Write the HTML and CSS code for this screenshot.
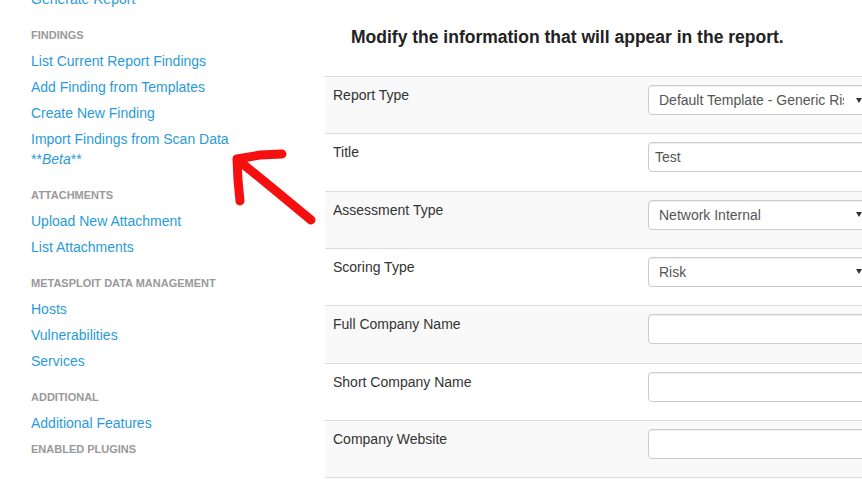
FILE: index.html
```html
<!DOCTYPE html>
<html>
<head>
<meta charset="utf-8">
<link rel="stylesheet" href="styles.css">
</head>
<body>
<div class="page">
  <nav class="sidebar">
    <a class="nav-link" href="#">Generate Report</a>
    <div class="nav-header">Findings</div>
    <a class="nav-link" href="#">List Current Report Findings</a>
    <a class="nav-link" href="#">Add Finding from Templates</a>
    <a class="nav-link" href="#">Create New Finding</a>
    <a class="nav-link" href="#">Import Findings from Scan Data **<em>Beta</em>**</a>
    <div class="nav-header">Attachments</div>
    <a class="nav-link" href="#">Upload New Attachment</a>
    <a class="nav-link" href="#">List Attachments</a>
    <div class="nav-header">Metasploit Data Management</div>
    <a class="nav-link" href="#">Hosts</a>
    <a class="nav-link" href="#">Vulnerabilities</a>
    <a class="nav-link" href="#">Services</a>
    <div class="nav-header">Additional</div>
    <a class="nav-link" href="#">Additional Features</a>
    <div class="nav-header nav-header-tight">Enabled Plugins</div>
  </nav>
  <main class="main">
    <h3 class="heading">Modify the information that will appear in the report.</h3>
    <div class="form-table">
      <div class="row row-alt">
        <div class="label">Report Type</div>
        <div class="field"><div class="select"><span class="select-text">Default Template - Generic Risk Scoring</span><span class="caret"></span></div></div>
      </div>
      <div class="row">
        <div class="label">Title</div>
        <div class="field"><div class="input">Test</div></div>
      </div>
      <div class="row row-alt">
        <div class="label">Assessment Type</div>
        <div class="field"><div class="select"><span class="select-text">Network Internal</span><span class="caret"></span></div></div>
      </div>
      <div class="row">
        <div class="label">Scoring Type</div>
        <div class="field"><div class="select"><span class="select-text">Risk</span><span class="caret"></span></div></div>
      </div>
      <div class="row row-alt">
        <div class="label">Full Company Name</div>
        <div class="field"><div class="input"></div></div>
      </div>
      <div class="row">
        <div class="label">Short Company Name</div>
        <div class="field"><div class="input"></div></div>
      </div>
      <div class="row row-alt">
        <div class="label">Company Website</div>
        <div class="field"><div class="input"></div></div>
      </div>
      <div class="row row-end"></div>
    </div>
  </main>
  <svg class="annotation" width="862" height="484" viewBox="0 0 862 484">
    <g fill="none" stroke="#f50f0f" stroke-width="9" stroke-linecap="round" stroke-linejoin="round">
      <path d="M282 154 L260 155 L237 159 L238 180 L240 201"/>
      <path d="M238 160 L276 191 L311 220"/>
    </g>
  </svg>
</div>
</body>
</html>
```

FILE: styles.css
```css
html, body {
  margin: 0;
  padding: 0;
  overflow: hidden;
  background: #fff;
}
body {
  font-family: "Liberation Sans", Arial, sans-serif;
  font-size: 14px;
  color: #333;
}
.page {
  position: relative;
  display: flex;
  width: 862px;
  height: 484px;
  overflow: hidden;
}
.sidebar {
  flex: 0 0 250px;
  width: 250px;
  margin-left: 31px;
  margin-right: 44px;
  margin-top: -14px;
  display: flex;
  flex-direction: column;
}
.nav-link {
  display: block;
  color: #2a9bd8;
  text-decoration: none;
  line-height: 20px;
  padding: 3px 0;
  font-size: 14px;
}
.nav-header {
  margin-top: 10px;
  height: 26px;
  line-height: 26px;
  font-size: 11px;
  font-weight: bold;
  text-transform: uppercase;
  color: #999;
}
.nav-header-tight {
  margin-top: 0;
}
.main {
  flex: 0 0 560px;
  width: 560px;
  padding-top: 25.5px;
}
.heading {
  margin: 0 0 28.5px 0;
  padding-left: 26px;
  font-size: 17.5px;
  line-height: 22px;
  font-weight: bold;
  color: #222;
}
.form-table {
  display: flex;
  flex-direction: column;
}
.row {
  display: grid;
  grid-template-columns: 315px 240px;
  height: 57.33px;
  box-sizing: border-box;
  border-top: 1px solid #ddd;
  padding-top: 8px;
  background: #fff;
}
.row-alt {
  background: #f9f9f9;
}
.row-end {
  height: 10px;
}
.label {
  padding-left: 8px;
  line-height: 20px;
  color: #333;
}
.field {
  padding: 0 8px;
}
.input, .select {
  box-sizing: border-box;
  height: 30px;
  border: 1px solid #ccc;
  border-radius: 4px;
  background: #fff;
  box-shadow: inset 0 1px 1px rgba(0,0,0,.075);
  color: #555;
  font-size: 14px;
  line-height: 28px;
}
.input {
  width: 226px;
  padding: 0 6px;
}
.select {
  width: 225px;
  display: flex;
  align-items: center;
  padding: 0 10px 0 10px;
}
.select-text {
  flex: 1;
  overflow: hidden;
  white-space: nowrap;
  margin-right: 12px;
}
.caret {
  width: 0;
  height: 0;
  border-left: 3px solid transparent;
  border-right: 3px solid transparent;
  border-top: 5px solid #333;
}
.annotation {
  position: absolute;
  left: 0;
  top: 0;
  pointer-events: none;
}
```
